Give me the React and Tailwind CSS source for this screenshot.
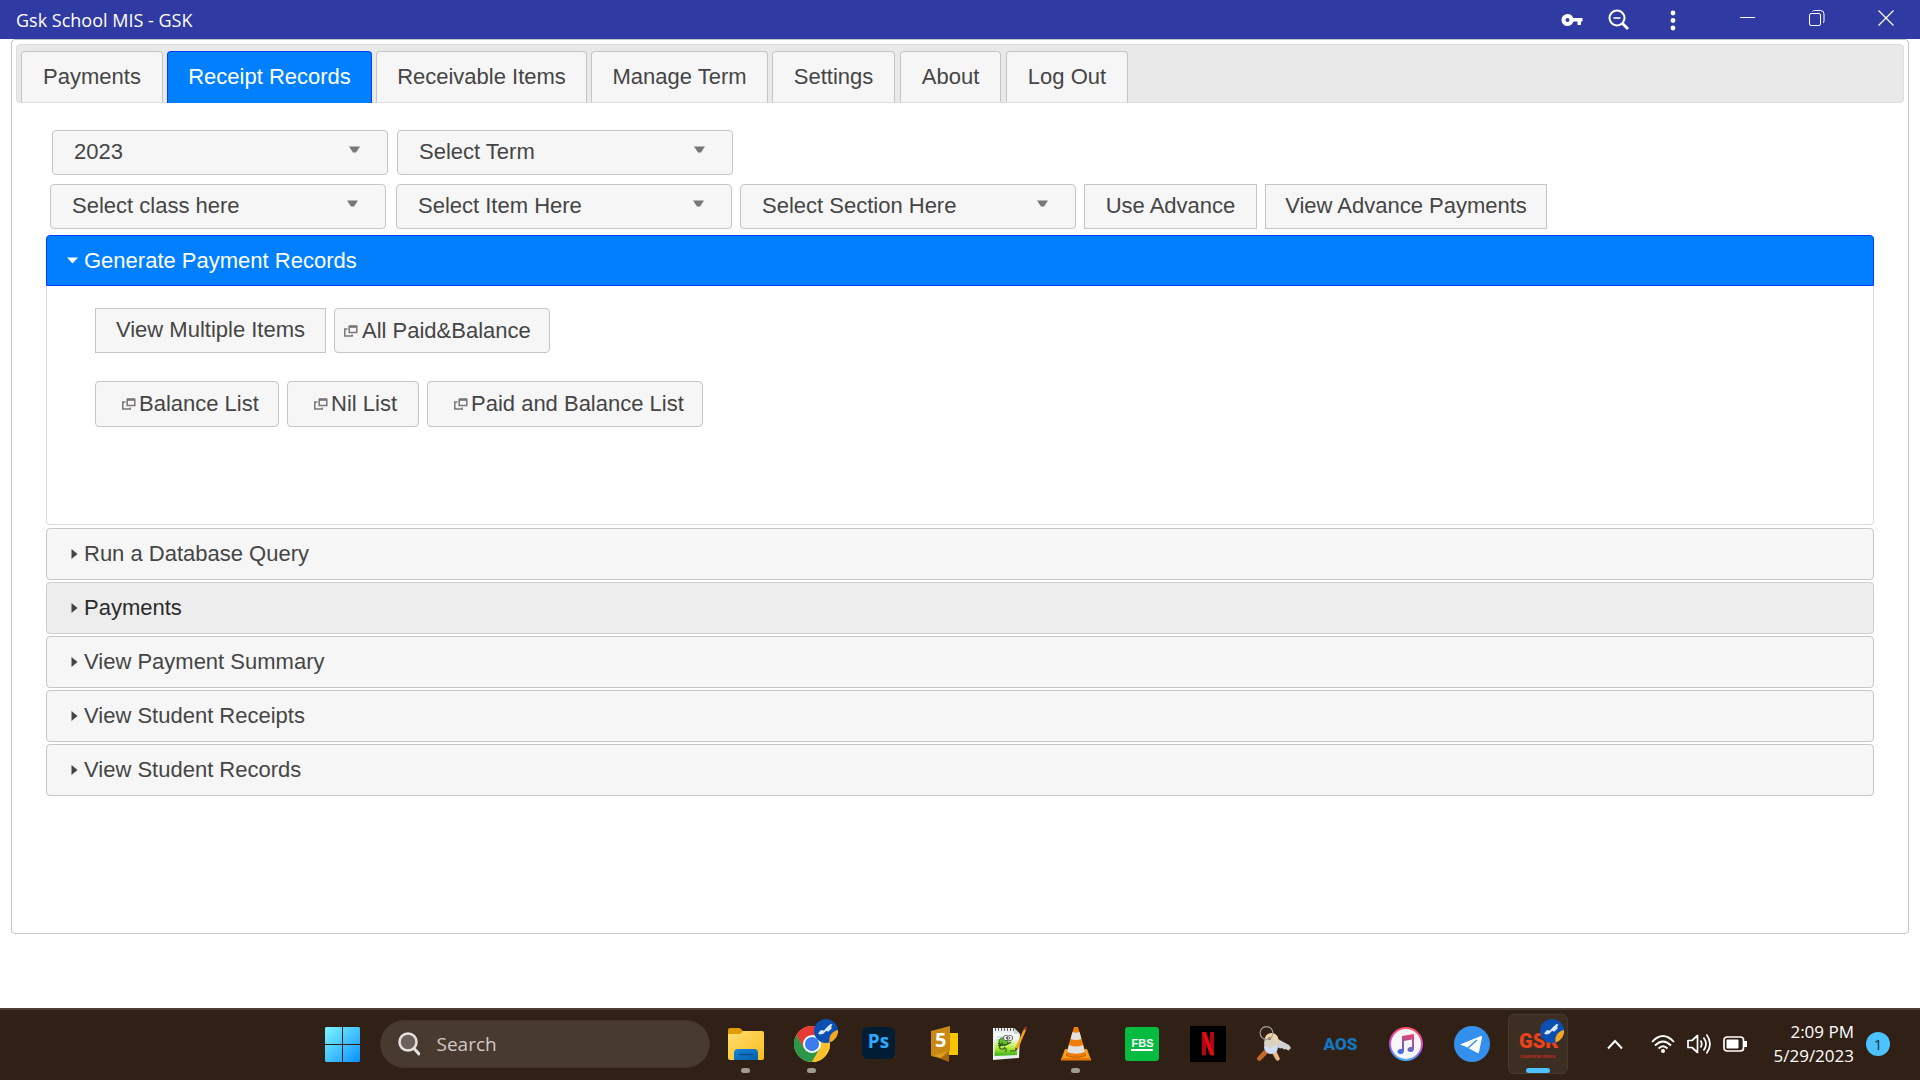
import React, { useState } from "react";

const tabs = [
  { label: "Payments", width: "w-[142px]", gap: "mr-1" },
  { label: "Receipt Records", width: "w-[205px]", gap: "mr-1", active: true },
  { label: "Receivable Items", width: "w-[211px]", gap: "mr-1" },
  { label: "Manage Term", width: "w-[177px]", gap: "mr-1" },
  { label: "Settings", width: "w-[123px]", gap: "mr-[5px]" },
  { label: "About", width: "w-[101px]", gap: "mr-[5px]" },
  { label: "Log Out", width: "w-[122px]", gap: "" },
];

const sections = [
  { label: "Run a Database Query" },
  { label: "Payments", hover: true },
  { label: "View Payment Summary" },
  { label: "View Student Receipts" },
  { label: "View Student Records" },
];

function TitleBar() {
  return (
    <header className="flex h-[39px] items-center bg-[#303aa3] text-white">
      <h1 className="flex-1 pl-4 font-['Open_Sans',sans-serif] text-[18px] leading-6">Gsk School MIS - GSK</h1>
      <div className="flex h-full items-center gap-[36px] pr-5">
        <div className="flex items-center gap-[25px]">
          <button aria-label="Saved passwords">
            <svg width="22" height="14" viewBox="0 0 22 14" fill="#fff">
              <path fillRule="evenodd" d="M6.500 1a6 6 0 0 1 5.700 4H21.500v3.500H20V12h-3.500V8.500h-4.200A6 6 0 1 1 6.500 1zM6.500 5a2 2 0 1 0 0 4 2 2 0 0 0 0-4z" />
            </svg>
          </button>
          <button aria-label="Zoom out">
            <svg width="22" height="22" viewBox="0 0 22 22" fill="none" stroke="#fff" strokeWidth="2">
              <circle cx="9" cy="9" r="7.500" />
              <path d="M5.500 9h7" strokeWidth="1.600" />
              <path d="M14 14l6 6" strokeWidth="2.800" />
            </svg>
          </button>
        </div>
        <button aria-label="More options">
          <svg width="14" height="22" viewBox="0 0 14 22" fill="#fff">
            <circle cx="7" cy="4" r="2.400" />
            <circle cx="7" cy="11.500" r="2.400" />
            <circle cx="7" cy="19" r="2.400" />
          </svg>
        </button>
      </div>
      <div className="flex items-center gap-[53px] pr-[26px] pb-1 pl-10">
        <button aria-label="Minimize">
          <svg width="16" height="16" viewBox="0 0 16 16" stroke="#fff"><path d="M0 7.500h15" /></svg>
        </button>
        <button aria-label="Restore">
          <svg width="16" height="16" viewBox="0 0 16 16" fill="none" stroke="#fff">
            <rect x=".5" y="3.500" width="11" height="12" rx="1.500" />
            <path d="M3.500 1.500Q4 .5 5.500.5h6q3.500 0 3.500 3.500v7q0 1.500-1 2" />
          </svg>
        </button>
        <button aria-label="Close">
          <svg width="16" height="16" viewBox="0 0 16 16" stroke="#fff" strokeWidth="1.200"><path d="M.5.5l15 15M15.500.5l-15 15" /></svg>
        </button>
      </div>
    </header>
  );
}

function SelectMenu({ label, option }) {
  return (
    <label className="relative block w-[336px]">
      <span className="sr-only">{label}</span>
      <select className="block h-[45px] w-full appearance-none rounded-[4px] border border-[#c5c5c5] bg-[#f6f6f6] pr-12 pb-0.5 pl-[21px] leading-8 text-[#454545]">
        <option>{option}</option>
      </select>
      <svg className="pointer-events-none absolute top-4 right-7" width="11" height="7" viewBox="0 0 11 7" fill="#777">
        <path d="M0 .5h11L7 6.500H4z" />
      </svg>
    </label>
  );
}

function PlainButton({ children, width }) {
  return (
    <button className={`h-[45px] border border-[#c5c5c5] bg-[#f6f6f6] pb-0.5 whitespace-nowrap ${width}`}>{children}</button>
  );
}

function WindowIcon() {
  return (
    <svg width="14" height="12" viewBox="0 0 14 12" fill="none" stroke="#777" strokeWidth="1.500">
      <path d="M5.200 1.500h7.600v6H5.200z" />
      <path d="M5 1.500h8" strokeWidth="2.500" />
      <path d="M3.500 4H.8v7h7.400V9.500" />
    </svg>
  );
}

function WindowButton({ label, size, pad, gap }) {
  return (
    <button className={`flex items-center rounded-[4px] border border-[#c5c5c5] bg-[#f6f6f6] whitespace-nowrap ${size} ${pad} ${gap}`}>
      <WindowIcon />
      {label}
    </button>
  );
}

function SectionHeader({ label, hover }) {
  return (
    <h3>
      <button
        aria-expanded="false"
        className={`flex h-[52px] w-full items-center gap-1.5 rounded-[4px] border pl-6 ${
          hover ? "border-[#ccc] bg-[#ededed] text-[#2b2b2b]" : "border-[#c5c5c5] bg-[#f6f6f6]"
        }`}
      >
        <svg width="7" height="10" viewBox="0 0 7 10" fill="#444"><path d="M.5 0L6.500 5 .5 10z" /></svg>
        {label}
      </button>
    </h3>
  );
}

function BrandBadge() {
  return (
    <svg className="absolute -top-[7px] left-[20px]" width="24" height="24" viewBox="0 0 24 24">
      <circle cx="12" cy="12" r="12" fill="#0b4fb3" />
      <path d="M24 11A12 12 0 0 1 15.500 23.500c-1-6 2-11 8.500-12.500z" fill="#f5a81c" />
      <path d="M4 14.500l3-3.500 3 .5 2.500-3 4-3.500 2 .5-1.500 2.500 1 1-3.500 3.500-2.500-.5-3 3-3 .5z" fill="#d8e6f8" />
    </svg>
  );
}

function FolderIcon() {
  return (
    <svg width="36" height="36" viewBox="0 0 36 36">
      <defs>
        <linearGradient id="folder" x1="0" y1="0" x2="1" y2="1"><stop stopColor="#ffdf72" /><stop offset="1" stopColor="#fcbc1b" /></linearGradient>
        <linearGradient id="tray" x1="0" y1="0" x2="1" y2="1"><stop stopColor="#1584d8" /><stop offset="1" stopColor="#0560ac" /></linearGradient>
      </defs>
      <path d="M0 4q0-2 2-2h9q1 0 2 1l3 3v6H0z" fill="#e29b05" />
      <path d="M0 8h11q1 0 2-1l2-2h19q2 0 2 2v25q0 2-2 2H2q-2 0-2-2z" fill="url(#folder)" />
      <path d="M6 34V27q0-4 4-4h16q4 0 4 4v7z" fill="url(#tray)" />
      <path d="M11 28.500h14" stroke="#064c8c" strokeWidth="1.500" />
    </svg>
  );
}

function ChromeIcon() {
  return (
    <span className="relative">
      <svg width="36" height="36" viewBox="0 0 48 48">
        <circle cx="24" cy="24" r="24" fill="#fbc02d" />
        <path d="M3.200 12A24 24 0 0 1 44.800 12H24L13.600 30z" fill="#e53935" />
        <path d="M3.200 12A24 24 0 0 0 24 48L34.400 30H13.600z" fill="#2e9648" />
        <path d="M44.800 12A24 24 0 0 1 24 48L34.400 30 24 12z" fill="#fbc02d" />
        <circle cx="24" cy="24" r="12" fill="#fff" />
        <circle cx="24" cy="24" r="9.500" fill="#3b7ded" />
      </svg>
      <BrandBadge />
    </span>
  );
}

function PhotoshopIcon() {
  return (
    <span className="mb-0.5 flex h-8 w-[33px] items-center justify-center rounded-[6px] bg-[#001d33] pb-1 font-['Open_Sans',sans-serif] text-[19px] leading-6 font-bold text-[#31a8ff]">
      Ps
    </span>
  );
}

function SublimeIcon() {
  return (
    <svg width="28" height="36" viewBox="0 0 28 36">
      <path d="M8 7h20v22H8z" fill="#f7c600" />
      <path d="M1 29l18-4v11z" fill="#a8650c" />
      <path d="M1 5L20 0v25L1 30z" fill="#c98713" />
      <path d="M1 30l18-5-8 7z" fill="#dd9d1c" />
      <text x="5" y="21" fontSize="20" fontWeight="700" fill="#fff" fontFamily="Open Sans, sans-serif">5</text>
    </svg>
  );
}

function NotepadIcon() {
  return (
    <svg width="36" height="36" viewBox="0 0 36 36">
      <defs>
        <linearGradient id="note" x1="0" y1="0" x2="0" y2="1"><stop offset=".25" stopColor="#f4f8f4" /><stop offset=".65" stopColor="#b5ec3a" /><stop offset=".95" stopColor="#45b81d" /></linearGradient>
      </defs>
      <path d="M1 2h21l6 6-1 24-26 2z" fill="#eceff1" />
      <path d="M2.500 7h23.500l-1 22-22.500 1z" fill="url(#note)" />
      <path d="M3 3.500h19" stroke="#444" strokeWidth="2.500" strokeDasharray="1 2" />
      <path d="M22 2v6h6z" fill="#cfd4d8" />
      <path d="M5 11h8M4 14h5" stroke="#a7bfd4" strokeWidth=".8" />
      <ellipse cx="11.500" cy="15.500" rx="4.500" ry="3.500" fill="#5cc22a" stroke="#2b6b14" />
      <circle cx="14" cy="12" r="2.600" fill="#fff" stroke="#444" strokeWidth=".8" />
      <circle cx="18" cy="12" r="2.600" fill="#fff" stroke="#444" strokeWidth=".8" />
      <circle cx="14.500" cy="12" r=".8" fill="#111" />
      <circle cx="17.500" cy="12" r=".8" fill="#111" />
      <path d="M6 17q5 5 13-1M9 19q-3 3 0 4t4-2M6 20l5-3M14 22v4M18 25h5" stroke="#2a5c17" strokeWidth="1.200" fill="none" />
      <path d="M32 3l2 1-8 19-3 2 .5-4z" fill="#f5a31c" />
      <path d="M32 3l1-2.500 2.200 1L34 4z" fill="#a8342e" />
      <path d="M23.500 21.500l2.200 1.500-2.700 2.500z" fill="#573719" />
    </svg>
  );
}

function VlcIcon() {
  return (
    <svg width="30" height="36" viewBox="0 0 30 36">
      <path d="M4 23h22l4 11H0z" fill="#f9a01b" />
      <path d="M0 32h30v2.500H0z" fill="#e87504" />
      <path d="M13 1h4l8 27q-10 5-20 0z" fill="#ef7c0b" />
      <path d="M11.500 6q3.500 1.500 7 0l2 7q-5.500 2-11 0zM8 19q7 3 14 0l2 7q-9 3.500-18 0z" fill="#e1e1e1" />
      <path d="M5 28q10 5 20 0v2q-10 4-20 0z" fill="#d16506" />
    </svg>
  );
}

function FbsIcon() {
  return (
    <span className="flex h-[34px] w-[34px] items-center justify-center rounded-[3px] bg-[#05bc40]">
      <span className="border-b-2 border-white font-['Liberation_Sans',Arial,sans-serif] text-[11px] leading-3 font-bold text-white">FBS</span>
    </span>
  );
}

function NetflixIcon() {
  return (
    <svg width="36" height="36" viewBox="0 0 36 36">
      <path d="M0 0h36v36H0z" fill="#000" />
      <path d="M12 6h4v23l-4 .5zM20 6h4v23.500l-4-.5z" fill="#b1060f" />
      <path d="M12 6h4l8 23.500-4-.5z" fill="#e50914" />
    </svg>
  );
}

function KeysIcon() {
  return (
    <svg width="36" height="36" viewBox="0 0 36 36">
      <path d="M8 24l4 3-8 8-3-1 0-2z" fill="#c56a25" />
      <path d="M15 25l5-1 4 9-2 2-2-1z" fill="#e9b781" />
      <path d="M21 12.500l12 6.500 2 3-2.500 2.500-3-1.500-1.500.5-2-1.500-2 .5-5-3z" fill="#ced2d3" />
      <circle cx="15" cy="21" r="7" fill="#cfdcf9" />
      <circle cx="15.500" cy="14" r="7" fill="#eed5a7" />
      <ellipse cx="14" cy="17" rx="6" ry="4.500" fill="#d8d0c1" />
      <circle cx="13.500" cy="12.500" r="1.500" fill="#7e6345" />
      <circle cx="10.500" cy="7" r="6.400" fill="none" stroke="#a3a09d" strokeWidth="1.100" />
    </svg>
  );
}

function AosIcon() {
  return (
    <span className="font-['Liberation_Sans_Narrow','Roboto',sans-serif] text-[17px] leading-8 font-black text-[#1376bf]">AOS</span>
  );
}

function MusicIcon() {
  return (
    <svg width="34" height="34" viewBox="0 0 34 34">
      <defs>
        <linearGradient id="ring" x1=".6" y1="0" x2=".4" y2="1"><stop stopColor="#ff5265" /><stop offset=".35" stopColor="#ed4cae" /><stop offset=".7" stopColor="#8e63f2" /><stop offset="1" stopColor="#3fb6f7" /></linearGradient>
        <linearGradient id="noteFill" x1=".6" y1="0" x2=".4" y2="1"><stop stopColor="#e8456f" /><stop offset="1" stopColor="#3b6fe6" /></linearGradient>
      </defs>
      <circle cx="17" cy="17" r="17" fill="url(#ring)" />
      <circle cx="17" cy="17" r="15" fill="#f6f6f6" />
      <path d="M13 9l12-2v14.500q0 3.500-3.500 3.500c-4 0-4-4.500 0-5l1.500-.3v-7.200l-8 1.500v9.500q0 3.500-3.500 3.500c-4 0-4-4.500 0-5l1.500-.3z" fill="url(#noteFill)" />
    </svg>
  );
}

function TelegramIcon() {
  return (
    <svg width="36" height="36" viewBox="0 0 36 36">
      <circle cx="18" cy="18" r="18" fill="#3390ec" />
      <path d="M6 18.500L27 10q1.500-.5 1 1.500L25 26q-.5 2-2 .8L11.500 20.500z" fill="#fff" />
      <path d="M23 14l-9 8" stroke="#3390ec" strokeWidth="1.500" />
    </svg>
  );
}

function GskIcon() {
  return (
    <span className="relative flex h-9 w-9 flex-col items-center justify-center">
      <span className="font-['Roboto',sans-serif] text-[20px] leading-6 font-black whitespace-nowrap text-[#e9421c]">GSK</span>
      <svg width="36" height="6" viewBox="0 0 36 6" aria-hidden="true">
        <text x="0" y="5" fontSize="4" fontWeight="700" fill="#c92c1b" fontFamily="Roboto, sans-serif">COMPUTER SERVICES</text>
      </svg>
      <BrandBadge />
    </span>
  );
}

const apps = [
  { name: "File Explorer", Icon: FolderIcon, running: true },
  { name: "Chrome", Icon: ChromeIcon, running: true },
  { name: "Photoshop", Icon: PhotoshopIcon },
  { name: "Sublime", Icon: SublimeIcon },
  { name: "Notepad++", Icon: NotepadIcon },
  { name: "VLC", Icon: VlcIcon, running: true },
  { name: "FBS", Icon: FbsIcon },
  { name: "Netflix", Icon: NetflixIcon },
  { name: "Keys", Icon: KeysIcon },
  { name: "AOS", Icon: AosIcon },
  { name: "iTunes", Icon: MusicIcon },
  { name: "Telegram", Icon: TelegramIcon },
  { name: "GSK", Icon: GskIcon, active: true },
];

function TaskApp({ app }) {
  const { Icon } = app;
  return (
    <button
      aria-label={app.name}
      className={`relative mx-[3px] flex h-[60px] w-[60px] items-center justify-center rounded-[6px] ${
        app.active ? "border border-[#493a30] bg-[#3d2e24]" : ""
      }`}
    >
      <Icon />
      {app.running && <span className="absolute bottom-px left-[25px] h-[5px] w-[9px] rounded-full bg-[#a19994]" />}
      {app.active && <span className="absolute bottom-0 left-[17px] h-[5px] w-6 rounded-full bg-[#4cc2ff]" />}
    </button>
  );
}

function Taskbar() {
  return (
    <footer className="flex h-[72px] items-center border-t-2 border-[#4b3e36] bg-[#302015] pb-0.5 font-['Open_Sans',sans-serif] text-white">
      <div className="flex flex-1 items-center justify-end">
        <button aria-label="Start" className="mr-5">
          <svg width="35" height="35" viewBox="0 0 35 35">
            <defs>
              <linearGradient id="start" gradientUnits="userSpaceOnUse" x1="0" y1="0" x2="35" y2="35"><stop stopColor="#7df4ff" /><stop offset=".5" stopColor="#46c4ff" /><stop offset="1" stopColor="#0691ff" /></linearGradient>
            </defs>
            <path d="M1 0h16v17H0V1zM18 0h16l1 1v16H18zM0 18h17v17H1l-1-1zM18 18h17v16l-1 1H18z" fill="url(#start)" />
          </svg>
        </button>
        <label className="mr-[3px] flex h-12 w-[330px] items-center gap-4 rounded-full border border-[#42342a] bg-[#493a30] pl-[17px]">
          <svg width="22" height="24" viewBox="0 0 22 24" fill="none" stroke="#e6e2df" strokeWidth="2.500">
            <circle cx="10" cy="10" r="8.500" fill="#6d625a" />
            <path d="M16 16.500l5 5.500" strokeLinecap="round" strokeWidth="3" />
          </svg>
          <span className="sr-only">Search apps</span>
          <input type="text" placeholder="Search" className="w-56 bg-transparent text-[19px] leading-7 outline-none placeholder:text-[#d0cbc6] placeholder:opacity-100" />
        </label>
        {apps.map((app) => (
          <TaskApp key={app.name} app={app} />
        ))}
      </div>
      <div className="flex items-center pr-[30px] pl-9">
        <button aria-label="Show hidden icons" className="mr-7">
          <svg width="16" height="11" viewBox="0 0 16 11" fill="none" stroke="#fff" strokeWidth="2"><path d="M1 9.500L8 2l7 7.500" /></svg>
        </button>
        <button aria-label="Network, volume and battery" className="flex items-center gap-3">
          <svg width="24" height="20" viewBox="0 0 24 20" fill="none" stroke="#fff" strokeWidth="1.800">
            <path d="M1 8Q12-4 23 8M4 11.500q8-8 16 0M7.500 14.500q4.500-4.500 9 0" />
            <circle cx="12" cy="17" r="2" fill="#fff" stroke="none" />
          </svg>
          <svg width="24" height="22" viewBox="0 0 24 22" fill="none" stroke="#fff" strokeWidth="1.700">
            <path d="M1 7.500h4l5.500-5v17l-5.500-5H1z" strokeLinejoin="round" />
            <path d="M13.500 7.500q2.500 3.500 0 7M16.500 4.500q5 6.500 0 13M19.500 1.500q7 9.500 0 19" />
          </svg>
          <svg width="24" height="16" viewBox="0 0 24 16" fill="none" stroke="#fff" strokeWidth="1.700">
            <rect x="1" y="1" width="19.500" height="14" rx="3" />
            <rect x="3.500" y="3.500" width="12" height="9" fill="#fff" stroke="none" rx="1" />
            <path d="M22.500 5v6" strokeWidth="3" />
          </svg>
        </button>
        <button className="ml-[26px] flex flex-col items-end text-[17px] leading-6 whitespace-nowrap">
          <span>2:09 PM</span>
          <span>5/29/2023</span>
        </button>
        <button aria-label="1 notification" className="ml-3 flex h-6 w-6 items-center justify-center rounded-full bg-[#4cc2ff] text-[15px] leading-6 text-[#122b3b]">
          1
        </button>
      </div>
    </footer>
  );
}

export default function App() {
  const [open, setOpen] = useState(true);
  return (
    <div className="flex min-h-screen flex-col bg-white font-['Liberation_Sans',Arial,sans-serif] text-[22px] leading-7 text-[#454545]">
      <TitleBar />
      <main className="mx-[11px] min-h-[895px] rounded-[4px] border border-[#c5c5c5] px-1 pt-1">
        <nav role="tablist" className="flex items-end rounded-[4px] border border-[#ddd] bg-[#e9e9e9] pt-1.5 pl-1">
          {tabs.map((tab) => (
            <button
              key={tab.label}
              role="tab"
              aria-selected={!!tab.active}
              className={`rounded-t-[4px] border border-b-0 whitespace-nowrap ${tab.width} ${tab.gap} ${
                tab.active ? "-mb-px h-[52px] border-[#003eff] bg-[#007fff] pb-0.5 text-white" : "h-[51px] border-[#c5c5c5] bg-[#f6f6f6] pb-px"
              }`}
            >
              {tab.label}
            </button>
          ))}
        </nav>
        <div className="px-[30px] pt-[27px]">
          <div className="ml-1.5 flex gap-[9px]">
            <SelectMenu label="Year" option="2023" />
            <SelectMenu label="Term" option="Select Term" />
          </div>
          <div className="mt-[9px] ml-1 flex gap-2">
            <div className="mr-[2px]">
              <SelectMenu label="Class" option="Select class here" />
            </div>
            <SelectMenu label="Item" option="Select Item Here" />
            <SelectMenu label="Section" option="Select Section Here" />
            <PlainButton width="w-[173px]">Use Advance</PlainButton>
            <PlainButton width="w-[282px]">View Advance Payments</PlainButton>
          </div>
          <h3 className="mt-1.5">
            <button
              aria-expanded={open}
              onClick={() => setOpen(!open)}
              className="flex h-[51px] w-full items-center gap-1.5 rounded-t-[4px] border border-[#003eff] bg-[#007fff] pl-5 text-white"
            >
              <svg width="11" height="7" viewBox="0 0 11 7" fill="#fff"><path d="M0 .5h11l-5.500 6z" /></svg>
              Generate Payment Records
            </button>
          </h3>
          {open && (
            <section className="h-[239px] rounded-b-[4px] border border-t-0 border-[#ddd] pt-[22px] pl-12">
              <div className="flex gap-2">
                <PlainButton width="w-[231px]">View Multiple Items</PlainButton>
                <WindowButton label="All Paid&Balance" size="h-[45px] w-[216px]" pad="pl-[9px]" gap="gap-1" />
              </div>
              <div className="mt-7 flex gap-2">
                <WindowButton label="Balance List" size="h-[46px] w-[184px]" pad="pl-[26px]" gap="gap-[3px]" />
                <WindowButton label="Nil List" size="h-[46px] w-[132px]" pad="pl-[26px]" gap="gap-[3px]" />
                <WindowButton label="Paid and Balance List" size="h-[46px] w-[276px]" pad="pl-[26px]" gap="gap-[3px]" />
              </div>
            </section>
          )}
          <div className="mt-[3px] flex flex-col gap-[2px]">
            {sections.map((section) => (
              <SectionHeader key={section.label} {...section} />
            ))}
          </div>
        </div>
      </main>
      <div className="flex-1" />
      <Taskbar />
    </div>
  );
}
